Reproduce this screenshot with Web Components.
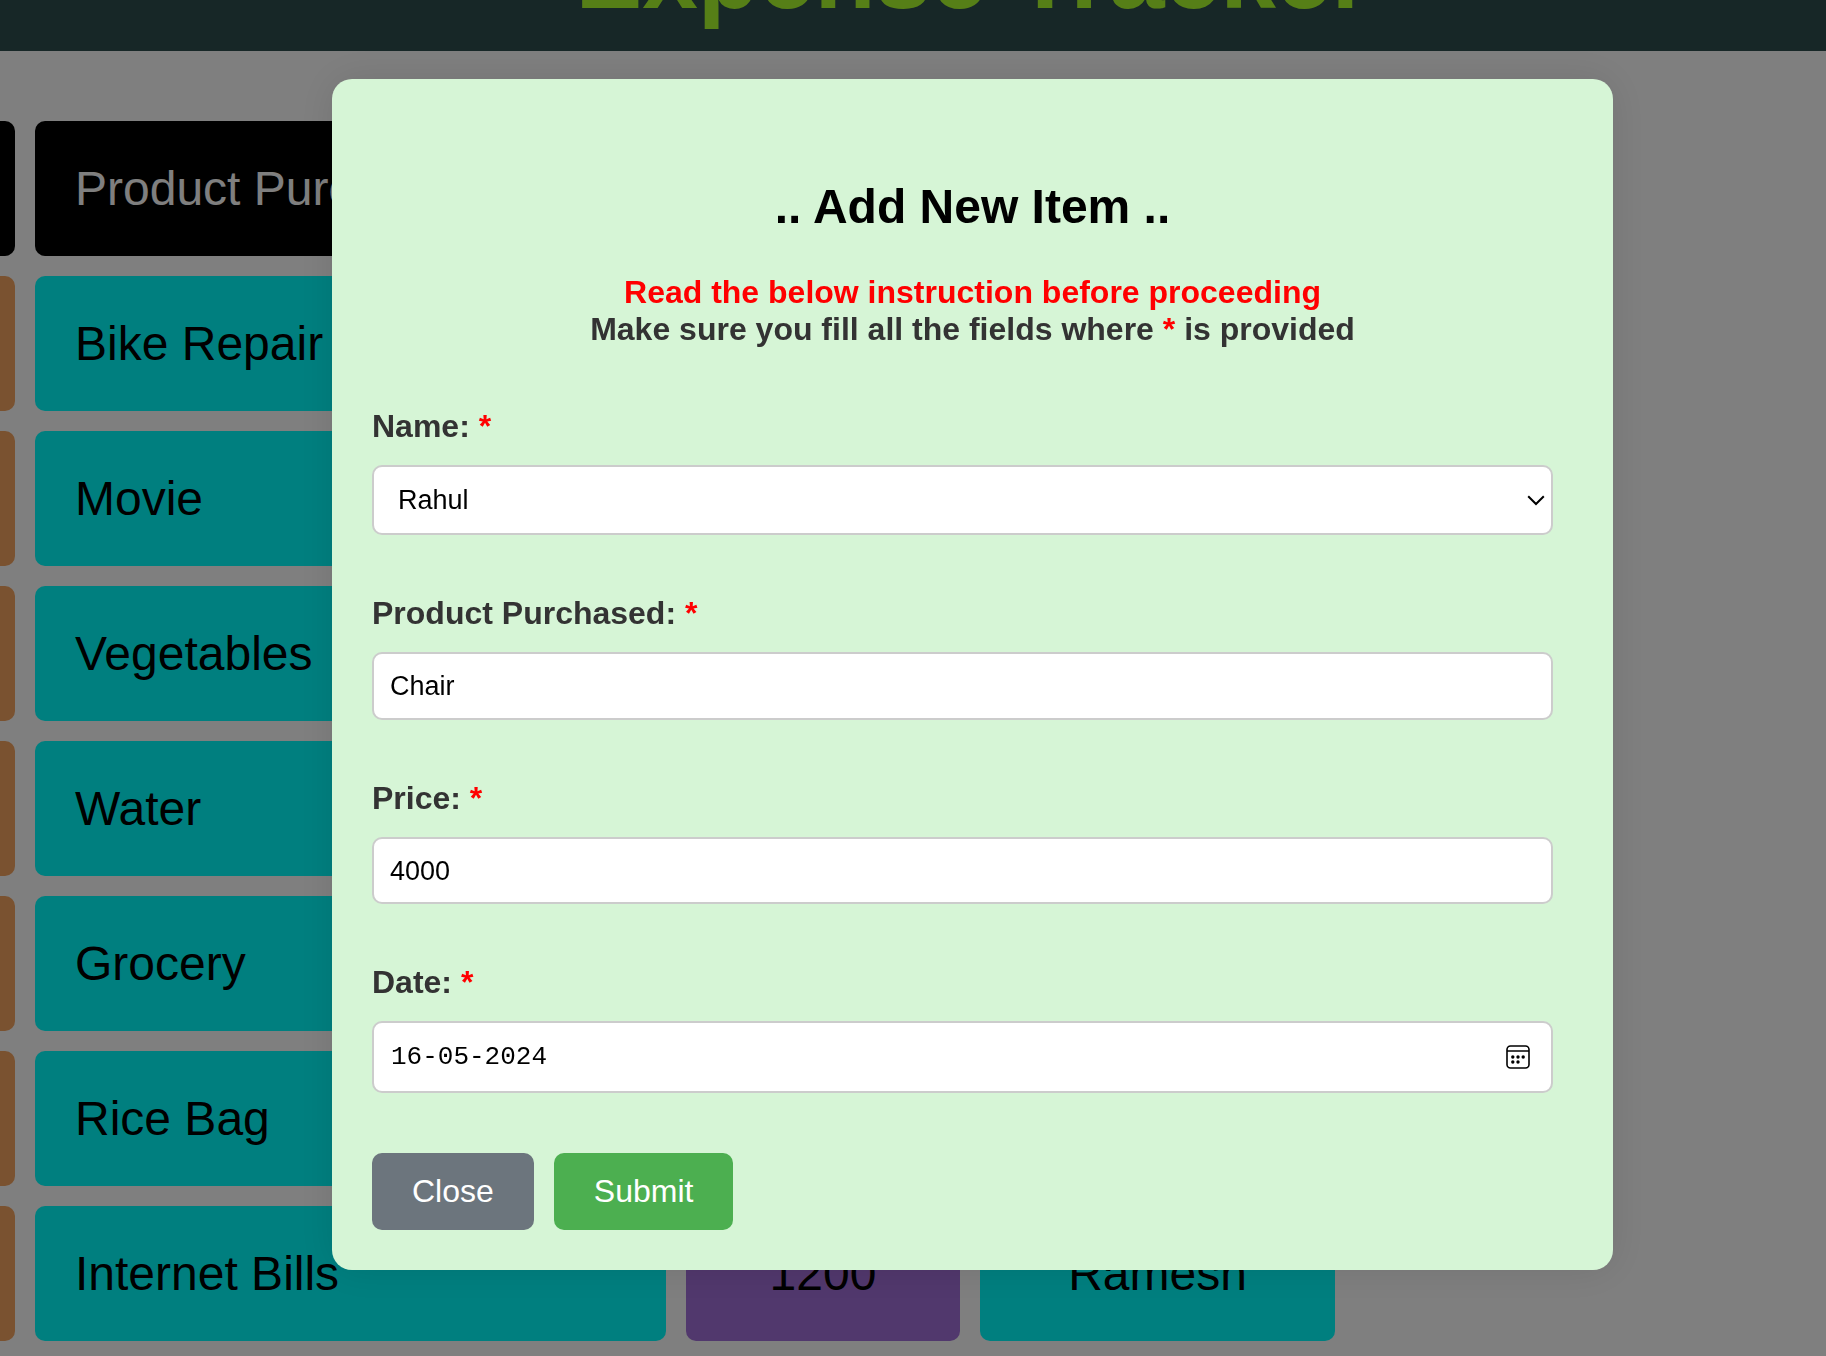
<!DOCTYPE html>
<html lang="en">
<head>
<meta charset="utf-8">
<title>Expense Tracker</title>
<style>
  body { margin: 0; background: #fff; font-family: "Liberation Sans", Arial, sans-serif; }
</style>
</head>
<body>
<expense-app>
  <site-header>Expense Tracker</site-header>
  <expense-table></expense-table>
  <modal-dialog slot="overlay">
    <item-form></item-form>
  </modal-dialog>
</expense-app>

<script>
const attach = (host, html) => {
  host.attachShadow({ mode: "open" }).innerHTML = html;
  return host.shadowRoot;
};

class ExpenseApp extends HTMLElement {
  constructor() {
    super();
    attach(this, `
      <style>
        :host { display: flex; flex-direction: column; height: 100vh; overflow: hidden; }
      </style>
      <slot></slot>
      <slot name="overlay"></slot>`);
  }
}

class SiteHeader extends HTMLElement {
  constructor() {
    super();
    attach(this, `
      <style>
        :host {
          display: flex; flex: none; align-items: flex-end; justify-content: center;
          box-sizing: border-box; height: 51px; padding: 0 0 30px 120px;
          overflow: hidden; background: darkslategray;
        }
        h1 { margin: 0; font-size: 100px; line-height: 96px; color: greenyellow; white-space: nowrap; }
      </style>
      <h1><slot></slot></h1>`);
  }
}

class ExpenseTable extends HTMLElement {
  constructor() {
    super();
    const items = [
      ["Bike Repair"], ["Movie"], ["Vegetables"], ["Water"],
      ["Grocery"], ["Rice Bag"], ["Internet Bills", "1200", "Ramesh"]
    ];
    const rows = items.map(([product, price = "", name = ""]) => `
      <tr><td class="date"></td><td class="product">${product}</td><td class="price">${price}</td><td class="name">${name}</td></tr>`).join("");
    attach(this, `
      <style>
        :host { display: block; flex: none; margin: 50px 0 0 -205px; }
        table { table-layout: fixed; width: 1560px; border-collapse: separate; border-spacing: 20px; font-size: 48px; line-height: 55px; }
        .c-date { width: 200px; } .c-product { width: 631px; } .c-price { width: 274px; } .c-name { width: 355px; }
        th, td { box-sizing: border-box; height: 135px; padding: 40px; border-radius: 10px; font-weight: normal; text-align: center; white-space: nowrap; }
        th { background: #000; color: #fff; }
        td { background: aqua; color: #000; }
        .date { background: sandybrown; }
        .price { background: #a370da; }
        .product { text-align: left; }
        th.date, th.price { background: #000; }
      </style>
      <table>
        <colgroup><col class="c-date"><col class="c-product"><col class="c-price"><col class="c-name"></colgroup>
        <thead><tr><th class="date"></th><th class="product">Product Purchased</th><th class="price"></th><th></th></tr></thead>
        <tbody>${rows}</tbody>
      </table>`);
  }
}

class ModalDialog extends HTMLElement {
  constructor() {
    super();
    attach(this, `
      <style>
        :host {
          position: fixed; inset: 0; box-sizing: border-box;
          padding: 79px 213px 0 332px; background: rgba(0, 0, 0, .5);
        }
        section {
          padding: 100px 40px 40px; border-radius: 20px; background: #d6f5d6;
          box-shadow: 0 0 40px rgba(0, 0, 0, .1);
        }
      </style>
      <section role="dialog" aria-modal="true" aria-label="Add New Item"><slot></slot></section>`);
  }
}

class FormField extends HTMLElement {
  connectedCallback() {
    if (this.shadowRoot) return;
    const kind = this.getAttribute("kind");
    const value = this.getAttribute("value");
    const controls = {
      select: `<select id="control"><option>${value}</option></select>
        <svg class="chevron" width="18" height="11" viewBox="0 0 18 11" aria-hidden="true"><path d="M1.2 1.2 9 9l7.800-7.800" fill="none" stroke="#000" stroke-width="2"/></svg>`,
      text: `<input id="control" type="text" value="${value}">`,
      number: `<input id="control" type="number" value="${value}">`,
      date: `<input id="control" type="text" inputmode="numeric" value="${value}">
        <button type="button" aria-label="Open calendar"><svg width="24" height="24" viewBox="0 0 24 24">
          <rect x="1" y="1" width="22" height="22" rx="3.500" fill="none" stroke="#000" stroke-width="1.600"/>
          <path d="M1 6h22" stroke="#000" stroke-width="1.400"/>
          <circle cx="6.800" cy="12" r="1.700"/><circle cx="12" cy="12" r="1.700"/><circle cx="17.200" cy="12" r="1.700"/>
          <circle cx="6.800" cy="17" r="1.700"/><circle cx="12" cy="17" r="1.700"/></svg></button>`
    };
    attach(this, `
      <style>
        :host { display: flex; flex-direction: column; gap: 20px; }
        label { font-size: 32px; line-height: 37px; font-weight: bold; color: #333; }
        label span { color: red; }
        .box {
          display: flex; align-items: center; box-sizing: border-box; margin-right: 20px;
          border: 2px solid #ccc; border-radius: 10px; background: #fff; overflow: hidden;
        }
        .select { height: 70px; } .text { height: 68px; } .number { height: 67px; } .date { height: 72px; }
        input, select {
          appearance: none; flex: 1; min-width: 0; margin: 0; padding: 16px; border: 0; outline: 0;
          background: transparent; color: #000; font: 27px/32px "Liberation Sans", Arial, sans-serif;
        }
        input[type=number] { appearance: textfield; }
        select { padding: 16px 24px; }
        .date input { padding: 16px 17px; font: 26px/32px "Liberation Mono", monospace; }
        .chevron { flex: none; margin-right: 6px; }
        button { display: flex; flex: none; margin: 0 21px 0 0; padding: 0; border: 0; background: none; }
      </style>
      <label for="control"><slot></slot>: <span>*</span></label>
      <div class="box ${kind}">${controls[kind]}</div>`);
  }
}

class ActionButton extends HTMLElement {
  constructor() {
    super();
    attach(this, `
      <style>
        :host { display: block; }
        button {
          display: block; padding: 20px 40px; border: 0; border-radius: 10px; color: #fff;
          background: var(--button-color, #6c757d); font: 32px/37px "Liberation Sans", Arial, sans-serif;
        }
      </style>
      <button type="button"><slot></slot></button>`);
  }
}

class ItemForm extends HTMLElement {
  constructor() {
    super();
    attach(this, `
      <style>
        :host { display: block; }
        form { display: flex; flex-direction: column; gap: 60px; }
        header { display: flex; flex-direction: column; gap: 40px; text-align: center; }
        h2 { margin: 0; font-size: 48px; line-height: 55px; color: #000; }
        p { margin: 0; font-size: 32px; line-height: 37px; font-weight: bold; color: #333; }
        .alert { color: red; }
        footer { display: flex; gap: 20px; }
        .submit { --button-color: #4caf50; }
      </style>
      <form>
        <header>
          <h2>.. Add New Item ..</h2>
          <p><span class="alert">Read the below instruction before proceeding</span><br>Make sure you fill all the fields where <span class="alert">*</span> is provided</p>
        </header>
        <form-field kind="select" value="Rahul">Name</form-field>
        <form-field kind="text" value="Chair">Product Purchased</form-field>
        <form-field kind="number" value="4000">Price</form-field>
        <form-field kind="date" value="16-05-2024">Date</form-field>
        <footer>
          <action-button>Close</action-button>
          <action-button class="submit">Submit</action-button>
        </footer>
      </form>`);
  }
}

customElements.define("expense-app", ExpenseApp);
customElements.define("site-header", SiteHeader);
customElements.define("expense-table", ExpenseTable);
customElements.define("modal-dialog", ModalDialog);
customElements.define("form-field", FormField);
customElements.define("action-button", ActionButton);
customElements.define("item-form", ItemForm);
</script>
</body>
</html>
